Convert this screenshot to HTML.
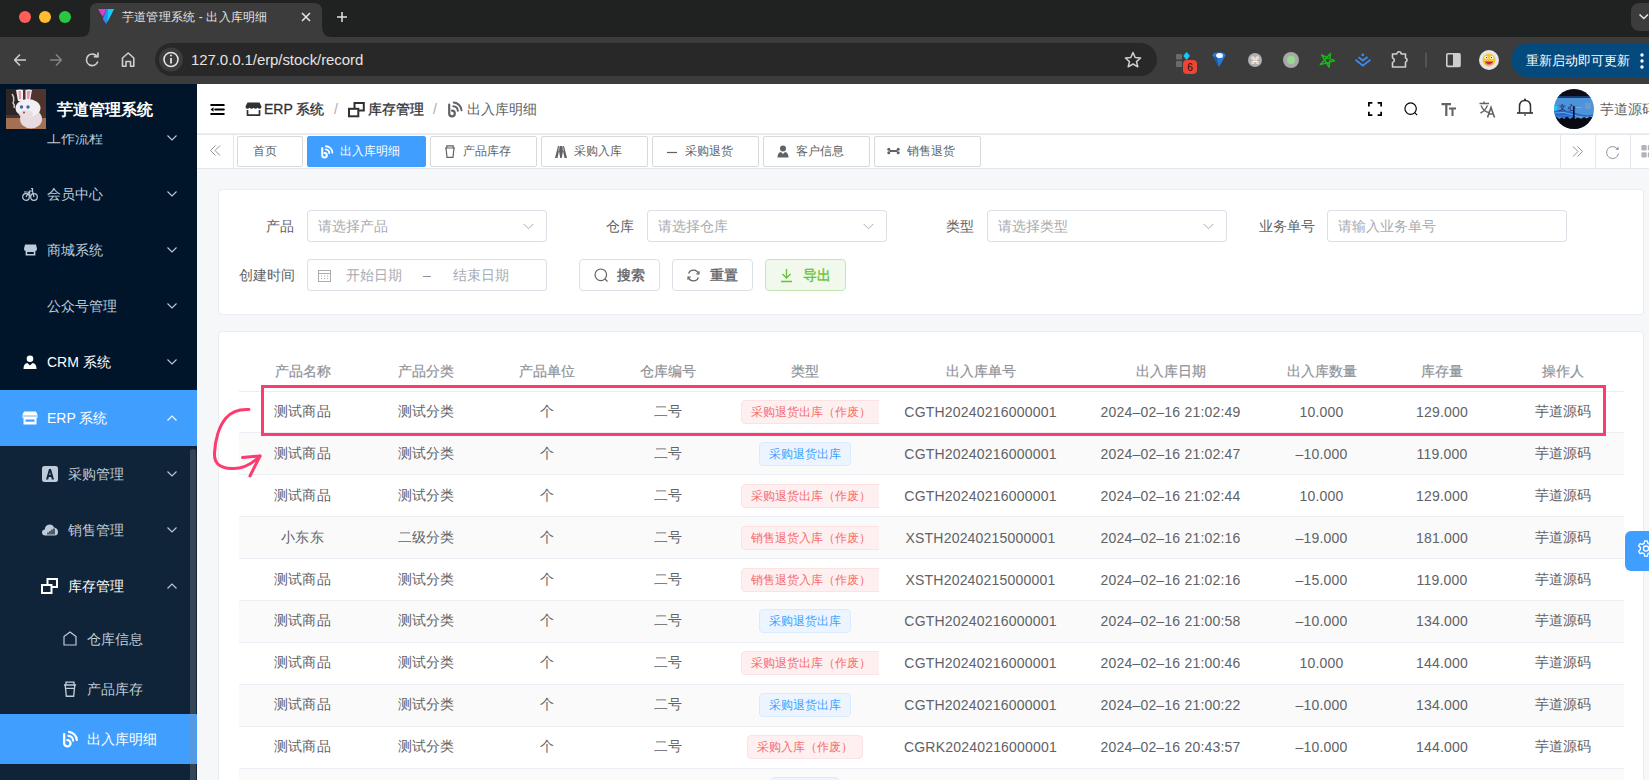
<!DOCTYPE html>
<html><head><meta charset="utf-8">
<style>
*{box-sizing:border-box;margin:0;padding:0}
html,body{width:1649px;height:780px;overflow:hidden;background:#f5f7f9;font-family:"Liberation Sans",sans-serif}
.abs{position:absolute}
svg{display:block}
/* chrome */
#tabstrip{position:absolute;left:0;top:0;width:1649px;height:37px;background:#202121}
#toolbar{position:absolute;left:0;top:37px;width:1649px;height:47px;background:#3c3c3c}
.dot{position:absolute;top:11px;width:12px;height:12px;border-radius:50%}
#omni{position:absolute;left:155px;top:43px;width:1002px;height:33px;border-radius:17px;background:#282828}
#url{position:absolute;left:191px;top:50px;font-size:15px;color:#e3e3e3;line-height:20px;letter-spacing:-0.08px}
#update{position:absolute;left:1511px;top:43px;width:160px;height:34px;border-radius:17px;background:#054a7c;color:#fff;font-size:13px;line-height:35px;padding-left:15px}
/* sidebar */
#sidebar{position:absolute;left:0;top:84px;width:197px;height:696px;background:#001529;overflow:hidden}
.mi{position:absolute;left:0;width:197px;height:56px;color:#bfcbd9;font-size:14px;line-height:56px}
.mi .t{position:absolute;left:47px;top:0}
.mi .ic{position:absolute;left:22px;top:20px}
.mi .ch{position:absolute;left:167px;top:24px}
.sub{background:#0f2438}
.act{background:#409eff;color:#fff}
/* main */
#header{position:absolute;left:197px;top:84px;width:1452px;height:50px;background:#fff;border-bottom:1px solid #eee}
#tags{position:absolute;left:197px;top:134px;width:1452px;height:35px;background:#fff;border-bottom:1px solid #e4e7ed}
.tag{position:absolute;top:2px;height:31px;border:1px solid #d9d9d9;border-radius:2px;font-size:12px;color:#606266;line-height:29px;background:#fff}
.tag.on{background:#409eff;border-color:#409eff;color:#fff}
.card{position:absolute;background:#fff;border:1px solid #e9ecf1;border-radius:4px}
.lbl{position:absolute;font-size:14px;color:#606266;line-height:32px;text-align:right}
.inp{position:absolute;height:32px;border-radius:4px;box-shadow:0 0 0 1px #dcdfe6 inset;font-size:14px;color:#a8abb2;line-height:32px;padding-left:11px}
.btn{position:absolute;height:32px;border-radius:4px;border:1px solid #dcdfe6;font-size:14px;color:#606266;line-height:30px;-webkit-text-stroke:0.35px currentColor}
table{border-collapse:collapse;table-layout:fixed;font-size:14px;color:#606266}
td,th{text-align:center;padding:0;overflow:hidden;white-space:nowrap}
th{height:42px;color:#909399;font-weight:normal;-webkit-text-stroke:0.2px #909399;vertical-align:bottom;padding-bottom:10px}
td{height:41.9px;border-top:1px solid #ebeef5;letter-spacing:0.2px}
td>div{padding:0 12px;overflow:hidden;white-space:nowrap;text-align:center}
tr.s td{background:#fafafa}
.tg{display:inline-block;letter-spacing:0;height:24px;line-height:22px;padding:0 9px;font-size:12px;border-radius:4px;border:1px solid}
.clip{display:inline-block;width:138px;margin-left:1px;overflow:hidden;vertical-align:top;text-align:left}
.tr{background:#fef0f0;border-color:#fde2e2;color:#f56c6c}
.tb{background:#ecf5ff;border-color:#d9ecff;color:#409eff}
</style></head><body>

<!-- ============ BROWSER CHROME ============ -->
<div id="tabstrip"></div>
<div class="dot" style="left:19px;background:#ff5f57"></div>
<div class="dot" style="left:39px;background:#febc2e"></div>
<div class="dot" style="left:59px;background:#28c840"></div>
<svg class="abs" style="left:0;top:0" width="400" height="40">
  <path d="M80 37 Q90 37 90 27 L90 11 Q90 3 98 3 L314 3 Q322 3 322 11 L322 27 Q322 37 332 37 Z" fill="#3c3c3c"/>
  <polygon points="98,9 106.4,9 102.8,17" fill="#e03cc8"/>
  <polygon points="106.4,9 114,9 106.1,24 102.8,19" fill="#2a8ef0"/>
  <polygon points="108,9 114,9 107.5,22" fill="#14ccf8"/>
  <path d="M302 13 L310 21 M310 13 L302 21" stroke="#e3e3e3" stroke-width="1.6"/>
  <path d="M342 12 V22 M337 17 H347" stroke="#e3e3e3" stroke-width="1.5"/>
</svg>
<div class="abs" style="left:122px;top:9px;font-size:12px;color:#e3e3e3;line-height:16px;letter-spacing:0.2px">芋道管理系统 - 出入库明细</div>
<div class="abs" style="left:1631px;top:3px;width:36px;height:28px;border-radius:8px;background:#3c3c3c"></div>
<svg class="abs" style="left:1638px;top:12px" width="11" height="9"><path d="M1.5 2.5 L5.8 6.5 L10 2.5" stroke="#e3e3e3" stroke-width="1.6" fill="none"/></svg>
<div id="toolbar"></div>
<svg class="abs" style="left:0;top:37px" width="150" height="47">
  <path d="M14.5 23 H26 M14.5 23 L20 17.5 M14.5 23 L20 28.5" stroke="#cfcfcf" stroke-width="1.6" fill="none"/>
  <path d="M61.5 23 H50 M61.5 23 L56 17.5 M61.5 23 L56 28.5" stroke="#858585" stroke-width="1.6" fill="none"/>
  <path d="M97.3 20 A5.8 5.8 0 1 0 97.8 24.5" stroke="#cfcfcf" stroke-width="1.6" fill="none"/>
  <path d="M93.8 19.8 H98 V15.5" stroke="#cfcfcf" stroke-width="1.6" fill="none"/>
  <path d="M122.5 21 L128.2 16 L133.8 21 V29.2 H130.5 V24.5 H126 V29.2 H122.5 Z" stroke="#cfcfcf" stroke-width="1.6" fill="none" stroke-linejoin="round"/>
</svg>
<div id="omni"></div>
<svg class="abs" style="left:155px;top:43px" width="40" height="33">
  <circle cx="16" cy="16.5" r="12" fill="#3c3c3c"/>
  <circle cx="16" cy="16.5" r="7" stroke="#e3e3e3" stroke-width="1.6" fill="none"/>
  <path d="M16 15 V20.5" stroke="#e3e3e3" stroke-width="1.8"/>
  <circle cx="16" cy="12.5" r="1" fill="#e3e3e3"/>
</svg>
<div id="url">127.0.0.1/erp/stock/record</div>
<svg class="abs" style="left:1120px;top:47px" width="28" height="28">
  <polygon points="13,5.5 15.2,10.5 20.6,11 16.5,14.6 17.8,19.8 13,17 8.2,19.8 9.5,14.6 5.4,11 10.8,10.5" stroke="#cfcfcf" stroke-width="1.5" fill="none" stroke-linejoin="round"/>
</svg>
<svg class="abs" style="left:1170px;top:44px" width="480" height="36">
  <rect x="6" y="10" width="6" height="5.5" rx="0.8" fill="#6a6a6a"/>
  <rect x="6" y="17" width="6" height="6" rx="0.8" fill="#6a6a6a"/>
  <path d="M14 11.8 L16.6 8.8 L19.2 11.8 L16.6 15 Z" fill="#18c8f5" stroke="#18c8f5" stroke-width="1.2" stroke-linejoin="round"/>
  <rect x="13" y="16" width="14" height="14" rx="4" fill="#ee4436"/>
  <text x="20" y="27" font-size="10" text-anchor="middle" fill="#111" font-family="Liberation Sans">6</text>
  <path d="M42.5 11.5 Q43 8.5 46.5 8.5 H51.5 Q55 8.5 55.5 11.5 L49 23 Z" fill="#2a78d8"/>
  <ellipse cx="49.5" cy="11.5" rx="3.5" ry="2.6" fill="#f0f6ff"/>
  <path d="M43 12 L49 23 L47 13 Z" fill="#1a5aa8"/>
  <circle cx="85" cy="16" r="7" fill="#b0b0b0"/>
  <text x="85" y="19.8" font-size="10" text-anchor="middle" fill="#fafafa" font-family="Liberation Sans">⌘</text>
  <circle cx="121" cy="16" r="8" fill="#a8a8a8"/>
  <circle cx="121" cy="16" r="4" fill="#98d890"/>
  <path d="M160.4 9.4 L159.1 23.3 L151.6 10.9 L164.6 16.7 L150.4 20.6 Z" stroke="#18b418" stroke-width="1.5" fill="none" stroke-linejoin="round"/>
  <path d="M188.5 13.1 L192.8 16.5 L197.5 13.1 M185.6 15.8 L192.8 21.6 L200.4 15.8" stroke="#3d8cf0" stroke-width="1.8" fill="none"/>
  <circle cx="192.8" cy="10.9" r="1.3" fill="#3d8cf0"/>
  <path d="M222.5 10 H226.8 A2.2 2.2 0 0 1 231.2 10 H235.5 V14 A2.2 2.2 0 0 1 235.5 18.2 V23 H222.5 V18.5 A2.3 2.3 0 0 0 222.5 14 Z" stroke="#cfcfcf" stroke-width="1.6" fill="none" stroke-linejoin="round"/>
  <path d="M256 8.5 V23.5" stroke="#6a6a6a" stroke-width="1"/>
  <rect x="276.8" y="9.8" width="13.2" height="12.6" rx="1" stroke="#cfcfcf" stroke-width="1.6" fill="none"/>
  <rect x="283" y="9.8" width="7" height="12.6" fill="#cfcfcf"/>
  <circle cx="319" cy="16" r="10" fill="#e6e6e6"/>
  <circle cx="319" cy="16" r="6.5" fill="#f3c83a"/>
  <path d="M314.5 17.5 Q319 24.5 323.5 17.5 Z" fill="#c8283a"/>
  <path d="M315.5 19.5 Q319 22 322.5 19.5" stroke="#f07090" stroke-width="1" fill="none"/>
  <circle cx="316.2" cy="13.5" r="1.6" fill="#fff"/><circle cx="321.8" cy="13.5" r="1.6" fill="#fff"/>
  <circle cx="316.5" cy="13.6" r="0.7" fill="#333"/><circle cx="321.5" cy="13.6" r="0.7" fill="#333"/>
</svg>
<div id="update">重新启动即可更新</div>
<svg class="abs" style="left:1637px;top:51px" width="13" height="20">
  <circle cx="5" cy="4" r="1.7" fill="#fff"/><circle cx="5" cy="10" r="1.7" fill="#fff"/><circle cx="5" cy="16" r="1.7" fill="#fff"/>
</svg>

<!-- ============ SIDEBAR ============ -->
<div id="sidebar">
  <div class="abs" style="left:0;top:50px;width:197px;height:646px;overflow:hidden">
    <div class="mi" style="top:-24px"><span class="t">工作流程</span><svg class="ch" style="left:167px;top:25px" width="10" height="6" viewBox="0 0 10 6"><path d="M0.5 0.5 L5 5 L9.5 0.5" stroke="#bfcbd9" stroke-width="1.1" fill="none"/></svg></div>
    <div class="mi" style="top:32px">
      <svg class="ic" style="left:22px;top:21px" width="16" height="14" viewBox="0 0 16 14"><circle cx="4" cy="10" r="3.3" stroke="#bfcbd9" stroke-width="1.2" fill="none"/><circle cx="12" cy="10" r="3.3" stroke="#bfcbd9" stroke-width="1.2" fill="none"/><path d="M4 10 L7.5 4 L10.5 4 L12 10 M7.5 4 L8 10 M9 1.5 L10.5 1.5 L10.5 4 M2 5 H5.5" stroke="#bfcbd9" stroke-width="1.2" fill="none"/></svg>
      <span class="t">会员中心</span><svg class="ch" style="left:167px;top:25px" width="10" height="6" viewBox="0 0 10 6"><path d="M0.5 0.5 L5 5 L9.5 0.5" stroke="#bfcbd9" stroke-width="1.1" fill="none"/></svg></div>
    <div class="mi" style="top:88px">
      <svg class="ic" style="left:24px;top:22px" width="13" height="12" viewBox="0 0 12 12" preserveAspectRatio="none"><path d="M1 0.5 H11 L12 4.5 Q12 7 10.5 7 V11.5 H1.5 V7 Q0 7 0 4.5 Z" fill="#bfcbd9"/><rect x="3" y="8" width="6" height="2" fill="#001529"/></svg>
      <span class="t">商城系统</span><svg class="ch" style="left:167px;top:25px" width="10" height="6" viewBox="0 0 10 6"><path d="M0.5 0.5 L5 5 L9.5 0.5" stroke="#bfcbd9" stroke-width="1.1" fill="none"/></svg></div>
    <div class="mi" style="top:144px"><span class="t">公众号管理</span><svg class="ch" style="left:167px;top:25px" width="10" height="6" viewBox="0 0 10 6"><path d="M0.5 0.5 L5 5 L9.5 0.5" stroke="#bfcbd9" stroke-width="1.1" fill="none"/></svg></div>
    <div class="mi" style="top:200px">
      <svg class="ic" style="left:23px;top:21px" width="14" height="14" viewBox="0 0 14 14"><circle cx="7" cy="3.8" r="3.3" fill="#fff"/><path d="M0.5 14 Q0.5 8.5 4.5 8 L7 10.5 L9.5 8 Q13.5 8.5 13.5 14 Z" fill="#fff"/></svg>
      <span class="t" style="color:#fff">CRM 系统</span><svg class="ch" style="left:167px;top:25px" width="10" height="6" viewBox="0 0 10 6"><path d="M0.5 0.5 L5 5 L9.5 0.5" stroke="#bfcbd9" stroke-width="1.1" fill="none"/></svg></div>
    <div class="mi act" style="top:256px">
      <svg class="ic" style="left:22px;top:21px" width="16" height="14" viewBox="0 0 16 14"><path d="M2 0.5 H14 L16 5 Q16 7 14.5 7 V13.5 H1.5 V7 Q0 7 0 5 Z" fill="#fff"/><rect x="3.5" y="8.5" width="9" height="2.2" fill="#409eff"/><path d="M0 5 H16" stroke="#409eff" stroke-width="0.8"/></svg>
      <span class="t">ERP 系统</span><svg class="ch" style="left:167px;top:25px" width="10" height="6" viewBox="0 0 10 6"><path d="M0.5 5.5 L5 1 L9.5 5.5" stroke="currentColor" stroke-width="1.1" fill="none"/></svg></div>
    <div class="abs sub" style="left:0;top:312px;width:197px;height:400px">
      <div class="mi" style="top:0">
        <svg class="ic" style="left:42px;top:20px" width="16" height="16" viewBox="0 0 16 16"><rect x="0" y="0" width="16" height="16" rx="2.5" fill="#bfcbd9"/><path d="M4 13.5 L7 3 H9 L12 13.5 H9.8 L9.2 11 H6.8 L6.2 13.5 Z M7.3 9 H8.7 L8 6 Z" fill="#0f2438"/></svg>
        <span class="t" style="left:68px">采购管理</span><svg class="ch" style="left:167px;top:25px" width="10" height="6" viewBox="0 0 10 6"><path d="M0.5 0.5 L5 5 L9.5 0.5" stroke="#bfcbd9" stroke-width="1.1" fill="none"/></svg></div>
      <div class="mi" style="top:56px">
        <svg class="ic" style="left:42px;top:21px" width="16" height="13" viewBox="0 0 16 13"><path d="M3.5 12.5 Q0 12.5 0 9.5 Q0 6.8 2.8 6.5 Q3 2 7.5 1.5 Q11 1.5 12 4.5 Q16 5 16 9 Q16 12.5 12.5 12.5 Z" fill="#bfcbd9"/><path d="M6 11.5 V9.5 M8 11.5 V8 M10 11.5 V6.5 M12 11.5 V5.5" stroke="#0f2438" stroke-width="1.3"/></svg>
        <span class="t" style="left:68px">销售管理</span><svg class="ch" style="left:167px;top:25px" width="10" height="6" viewBox="0 0 10 6"><path d="M0.5 0.5 L5 5 L9.5 0.5" stroke="#bfcbd9" stroke-width="1.1" fill="none"/></svg></div>
      <div class="mi" style="top:112px">
        <svg class="ic" style="left:41px;top:20px" width="17" height="16" viewBox="0 0 17 16"><rect x="6.5" y="1" width="9.5" height="8" stroke="#fff" stroke-width="2" fill="none"/><rect x="1" y="7" width="9.5" height="8" stroke="#fff" stroke-width="2" fill="#0f2438"/></svg>
        <span class="t" style="left:68px;color:#fff">库存管理</span><svg class="ch" style="left:167px;top:25px" width="10" height="6" viewBox="0 0 10 6"><path d="M0.5 5.5 L5 1 L9.5 5.5" stroke="currentColor" stroke-width="1.1" fill="none"/></svg></div>
      <div class="mi" style="top:168px;height:50px;line-height:50px">
        <svg class="ic" style="left:63px;top:17px" width="14" height="15" viewBox="0 0 14 15"><path d="M1 14 V5.5 L7 1 L13 5.5 V14 Z" stroke="#bfcbd9" stroke-width="1.2" fill="none" stroke-linejoin="round"/></svg>
        <span class="t" style="left:87px">仓库信息</span></div>
      <div class="mi" style="top:218px;height:50px;line-height:50px">
        <svg class="ic" style="left:63px;top:17px" width="14" height="16" viewBox="0 0 12 14"><path d="M0.7 3.5 H11.3 M1.8 3.5 L2.8 13.3 H9.2 L10.2 3.5 M2.5 3.5 V1 H9.5 V3.5 M2.3 6.5 H9.7" stroke="#bfcbd9" stroke-width="1.2" fill="none"/></svg>
        <span class="t" style="left:87px">产品库存</span></div>
      <div class="mi act" style="top:268px;height:50px;line-height:50px">
        <svg class="ic" style="left:61px;top:16px" width="18" height="18" viewBox="0 0 16 17"><path d="M2.5 4 V12.5 A3 3 0 1 0 5.5 9.5" stroke="#fff" stroke-width="2.2" fill="none" stroke-linecap="round"/><path d="M6.5 5.5 A5 5 0 0 1 11 10 M7 1.8 A8.5 8.5 0 0 1 14.5 9.5" stroke="#fff" stroke-width="2" fill="none" stroke-linecap="round"/></svg>
        <span class="t" style="left:87px">出入库明细</span></div>
    </div>
    <div class="abs" style="left:190px;top:315px;width:6px;height:400px;border-radius:3px;background:rgba(144,147,153,0.3)"></div>
  </div>
  <div class="abs" style="left:0;top:0;width:197px;height:50px;background:#001529">
    <svg class="abs" style="left:6px;top:5px" width="40" height="40" viewBox="0 0 40 40">
      <rect width="40" height="40" fill="#4e342c"/>
      <rect x="0" y="0" width="13" height="26" fill="#2e2624"/>
      <path d="M6 5 Q9 9 7 14 Q9 16 8 19" stroke="#c8c8c8" stroke-width="1.5" fill="none"/>
      <rect y="29" width="40" height="11" fill="#a27052"/>
      <path d="M10 1 Q14 0 17 1 L17 12 L12 12 Z" fill="#f2eef0"/>
      <path d="M12.5 2 L15 2 L15 10 L13 10 Z" fill="#e898b0"/>
      <path d="M19.5 1 Q23 0 26 1 L24 12 L19.5 12 Z" fill="#f2eef0"/>
      <path d="M21 2 L24.5 2 L23 10 L21 10 Z" fill="#e898b0"/>
      <ellipse cx="25" cy="30" rx="11" ry="9.5" fill="#e6dbe0"/>
      <ellipse cx="22" cy="19" rx="12.5" ry="9" fill="#f2f0f2"/>
      <ellipse cx="20" cy="25" rx="7" ry="4" fill="#eadde2"/>
      <circle cx="15.5" cy="18" r="1.7" fill="#3a68a8"/>
      <circle cx="22" cy="18" r="1.7" fill="#3a68a8"/>
      <circle cx="18" cy="23.5" r="1" fill="#7a4a3a"/>
    </svg>
    <div class="abs" style="left:57px;top:16px;font-size:16px;font-weight:bold;color:#fff;line-height:20px">芋道管理系统</div>
  </div>
</div>

<!-- ============ HEADER ============ -->
<div id="header">
  <svg class="abs" style="left:13px;top:20px" width="15" height="12" viewBox="0 0 15 12">
    <path d="M1.2 1 H13.8 M5.2 5.5 H13.8 M1.2 10 H13.8" stroke="#000" stroke-width="2" stroke-linecap="round"/>
    <path d="M0.5 5.5 L3.5 3.2 V7.8 Z" fill="#000"/>
  </svg>
  <svg class="abs" style="left:48px;top:18px" width="17" height="14" viewBox="0 0 17 14">
    <path d="M2.5 0.5 H14.5 L16.5 4.5 Q16.5 6.8 14.8 6.8 Q13.3 6.8 12.5 5.8 Q11.5 6.8 10.5 6.8 Q9.2 6.8 8.5 5.8 Q7.8 6.8 6.5 6.8 Q5.5 6.8 4.5 5.8 Q3.7 6.8 2.2 6.8 Q0.5 6.8 0.5 4.5 Z" fill="#303133"/>
    <path d="M2.5 8 V13.2 H14.5 V8" stroke="#303133" stroke-width="1.7" fill="none" stroke-linejoin="round"/>
  </svg>
  <div class="abs" style="left:67px;top:15px;font-size:14px;line-height:20px;color:#303133;-webkit-text-stroke:0.3px #303133">ERP 系统</div>
  <div class="abs" style="left:137px;top:15px;font-size:14px;line-height:20px;color:#a8abb2">/</div>
  <svg class="abs" style="left:151px;top:18px" width="17" height="16" viewBox="0 0 17 16">
    <rect x="6.5" y="1" width="9.3" height="7.5" stroke="#303133" stroke-width="2" fill="none"/>
    <rect x="1" y="6.8" width="9.3" height="7.5" stroke="#303133" stroke-width="2" fill="#fff"/>
  </svg>
  <div class="abs" style="left:171px;top:15px;font-size:14px;line-height:20px;color:#303133;-webkit-text-stroke:0.3px #303133">库存管理</div>
  <div class="abs" style="left:236px;top:15px;font-size:14px;line-height:20px;color:#a8abb2">/</div>
  <svg class="abs" style="left:250px;top:17px" width="16" height="17" viewBox="0 0 16 17">
    <path d="M2.2 3.5 V12.5 A2.8 2.8 0 1 0 5 9.7" stroke="#606266" stroke-width="2.2" fill="none" stroke-linecap="round"/>
    <path d="M6.3 5.3 A4.8 4.8 0 0 1 10.8 9.8 M6.8 1.5 A8.3 8.3 0 0 1 14.5 9.3" stroke="#606266" stroke-width="2" fill="none" stroke-linecap="round"/>
  </svg>
  <div class="abs" style="left:270px;top:15px;font-size:14px;line-height:20px;color:#606266">出入库明细</div>

  <svg class="abs" style="left:1171px;top:18px" width="14" height="14" viewBox="0 0 16 16">
    <path d="M1 5 V1 H5 M11 1 H15 V5 M15 11 V15 H11 M5 15 H1 V11" stroke="#000" stroke-width="2" fill="none"/>
  </svg>
  <svg class="abs" style="left:1207px;top:18px" width="14.5" height="14.5" viewBox="0 0 16 16">
    <circle cx="7.3" cy="7.3" r="6.3" stroke="#000" stroke-width="1.3" fill="none"/>
    <path d="M11.8 11.8 L14.5 14.5" stroke="#000" stroke-width="1.3"/>
  </svg>
  <svg class="abs" style="left:1244px;top:19px" width="16" height="14" viewBox="0 0 16 14">
    <path d="M0.5 1.2 H10 M5.3 1.2 V13" stroke="#606266" stroke-width="2.2"/>
    <path d="M8 5.5 H15 M11.5 5.5 V13" stroke="#606266" stroke-width="2"/>
  </svg>
  <svg class="abs" style="left:1282px;top:17px" width="17" height="17" viewBox="0 0 17 17">
    <path d="M0.5 2.5 H10 M5 0.5 V2.5 M2 4.5 Q5 11 10 11.5 M8.5 4.5 Q6 10 1.5 12" stroke="#606266" stroke-width="1.4" fill="none"/>
    <path d="M8.5 16.5 L12 6.5 L15.5 16.5 M9.8 13 H14.2" stroke="#606266" stroke-width="1.6" fill="none"/>
  </svg>
  <svg class="abs" style="left:1319px;top:14px" width="18" height="18" viewBox="0 0 18 18">
    <path d="M3.5 15 V8.5 Q3.5 2.5 9 2.5 Q14.5 2.5 14.5 8.5 V15" stroke="#303133" stroke-width="1.5" fill="none"/>
    <path d="M1 15 H17" stroke="#303133" stroke-width="1.6"/>
    <circle cx="9" cy="1.7" r="1.1" fill="#303133"/>
    <path d="M8.2 17 H9.8" stroke="#303133" stroke-width="1.3"/>
  </svg>
  <svg class="abs" style="left:1357px;top:5px" width="40" height="40" viewBox="0 0 40 40">
    <defs><clipPath id="av"><circle cx="20" cy="20" r="20"/></clipPath></defs>
    <g clip-path="url(#av)">
      <rect width="40" height="40" fill="#4d93da"/>
      <rect width="40" height="7" fill="#0c0c18"/>
      <rect y="7" width="40" height="2" fill="#1c3a70"/>
      <path d="M0 22 Q12 20 22 24 T40 25 V30 Q28 26 18 28 T0 27 Z" fill="#2566c8"/>
      <path d="M0 24 Q10 22 20 26 T40 27" stroke="#7ab8f0" stroke-width="0.8" fill="none"/>
      <path d="M0 28 Q14 25 24 29 T40 29" stroke="#3a80e0" stroke-width="1" fill="none"/>
      <path d="M0 29 L3 28 L5 30 L8 28.5 L10 30 L13 27.5 L16 30 L19 28 L21 30 L24 28.5 L27 30 L30 28 L33 29.5 L36 27.5 L40 29 V40 H0 Z" fill="#0a0a12"/>
      <rect x="19" y="17" width="1.6" height="13" fill="#0a0a12"/>
      <text x="5" y="20.5" font-size="6.5" font-weight="bold" fill="#1a2c6a" font-family="Liberation Sans">文 心</text>
      <path d="M22 18.5 H28" stroke="#7aa8e0" stroke-width="1.2"/>
      <rect x="31" y="14" width="6" height="6" fill="#6b9ad0"/>
      <circle cx="1" cy="19" r="2.5" fill="#20c8f8"/>
    </g>
  </svg>
  <div class="abs" style="left:1403px;top:15px;font-size:14px;line-height:20px;color:#606266;white-space:nowrap">芋道源码</div>
</div>
<div id="tags" style="border:none;background:transparent">
  <div class="abs" style="left:0;top:0;width:1452px;height:1px;background:#e4e7ed"></div>
  <div class="abs" style="left:0;top:1px;width:1452px;height:34px;background:#fff"></div>
  <div class="abs" style="left:0;top:34px;width:1452px;height:1px;background:#e4e7ed"></div>
  <div class="abs" style="left:36px;top:0;width:1px;height:35px;background:#e4e7ed"></div>
  <svg class="abs" style="left:13px;top:11px" width="12" height="12" viewBox="0 0 12 12">
    <path d="M5.5 0.5 L0.5 5.5 L5.5 10.5 M10 0.5 L5 5.5 L10 10.5" stroke="#909399" stroke-width="1" fill="none"/>
  </svg>
  <div class="tag" style="left:40px;width:66px;padding-left:15px">首页</div>
  <div class="tag on" style="left:110px;width:119px">
    <svg class="abs" style="left:12px;top:8px" width="14" height="14" viewBox="0 0 16 17">
      <path d="M2.2 3.5 V12.5 A2.8 2.8 0 1 0 5 9.7" stroke="#fff" stroke-width="2.4" fill="none" stroke-linecap="round"/>
      <path d="M6.3 5.3 A4.8 4.8 0 0 1 10.8 9.8 M6.8 1.5 A8.3 8.3 0 0 1 14.5 9.3" stroke="#fff" stroke-width="2.2" fill="none" stroke-linecap="round"/>
    </svg>
    <span class="abs" style="left:32px;top:0">出入库明细</span>
  </div>
  <div class="tag" style="left:233px;width:107px">
    <svg class="abs" style="left:13px;top:8px" width="12" height="13" viewBox="0 0 12 13">
      <path d="M1 3 H11 M2 3 L3 12.3 H9 L10 3 M2.8 3 V0.8 H9.2 V3" stroke="#606266" stroke-width="1.2" fill="none"/>
    </svg>
    <span class="abs" style="left:32px;top:0">产品库存</span>
  </div>
  <div class="tag" style="left:344px;width:107px">
    <svg class="abs" style="left:12px;top:8px" width="14" height="13" viewBox="0 0 14 13">
      <path d="M1 13 L4 1 H10 L13 13 H10.5 L9 6 L7.8 13 H6.2 L5 6 L3.5 13 Z" fill="#606266"/>
      <path d="M5.5 1 L4.5 6 M8.5 1 L9.5 6" stroke="#fff" stroke-width="0.6"/>
    </svg>
    <span class="abs" style="left:32px;top:0">采购入库</span>
  </div>
  <div class="tag" style="left:455px;width:107px">
    <svg class="abs" style="left:13px;top:14px" width="12" height="3" viewBox="0 0 12 3"><path d="M1 1.5 H11" stroke="#606266" stroke-width="1.2"/></svg>
    <span class="abs" style="left:32px;top:0">采购退货</span>
  </div>
  <div class="tag" style="left:566px;width:107px">
    <svg class="abs" style="left:13px;top:8px" width="12" height="13" viewBox="0 0 12 13"><circle cx="6" cy="3.5" r="3" fill="#606266"/><path d="M0.5 12.5 Q0.5 7.5 4 7 L6 9 L8 7 Q11.5 7.5 11.5 12.5 Z" fill="#606266"/></svg>
    <span class="abs" style="left:32px;top:0">客户信息</span>
  </div>
  <div class="tag" style="left:677px;width:107px">
    <svg class="abs" style="left:12px;top:9px" width="13" height="10" viewBox="0 0 13 10"><path d="M2.5 5 H10.5" stroke="#606266" stroke-width="2"/><circle cx="1.8" cy="3.3" r="1.5" fill="#606266"/><circle cx="1.8" cy="6.7" r="1.5" fill="#606266"/><circle cx="11.2" cy="3.3" r="1.5" fill="#606266"/><circle cx="11.2" cy="6.7" r="1.5" fill="#606266"/></svg>
    <span class="abs" style="left:32px;top:0">销售退货</span>
  </div>
  <div class="abs" style="left:1363px;top:0;width:1px;height:35px;background:#e4e7ed"></div>
  <div class="abs" style="left:1398px;top:0;width:1px;height:35px;background:#e4e7ed"></div>
  <div class="abs" style="left:1433px;top:0;width:1px;height:35px;background:#e4e7ed"></div>
  <svg class="abs" style="left:1375px;top:12px" width="12" height="12" viewBox="0 0 12 12">
    <path d="M1 0.5 L6 5.5 L1 10.5 M5.5 0.5 L10.5 5.5 L5.5 10.5" stroke="#909399" stroke-width="1" fill="none"/>
  </svg>
  <svg class="abs" style="left:1408px;top:10px" width="16" height="16" viewBox="0 0 16 16">
    <path d="M13 6 A6 6 0 1 0 13.5 9.5" stroke="#909399" stroke-width="1" fill="none"/>
    <path d="M10.5 5.8 H13.6 V2.6 Z" fill="#909399"/>
  </svg>
  <svg class="abs" style="left:1444px;top:11px" width="8" height="14" viewBox="0 0 8 14">
    <rect x="0.4" y="0.1" width="5.2" height="5.4" rx="1.2" fill="#b1b3b8"/><rect x="0.4" y="7.2" width="5.2" height="5.3" rx="1.2" fill="#b1b3b8"/><rect x="6.8" y="0.1" width="5.2" height="5.4" rx="1.2" fill="#b1b3b8"/><rect x="6.8" y="7.2" width="5.2" height="5.3" rx="1.2" fill="#b1b3b8"/>
  </svg>
</div>

<!-- ============ FILTER CARD ============ -->
<div class="card" style="left:218px;top:189px;width:1426px;height:126px"></div>
<div class="lbl" style="left:239px;top:210px;width:55px">产品</div>
<div class="inp" style="left:307px;top:210px;width:240px">请选择产品<svg class="abs" style="right:13px;top:13px" width="11" height="7" viewBox="0 0 11 7"><path d="M0.5 0.8 L5.5 5.8 L10.5 0.8" stroke="#a8abb2" stroke-width="1" fill="none"/></svg></div>
<div class="lbl" style="left:579px;top:210px;width:55px">仓库</div>
<div class="inp" style="left:647px;top:210px;width:240px">请选择仓库<svg class="abs" style="right:13px;top:13px" width="11" height="7" viewBox="0 0 11 7"><path d="M0.5 0.8 L5.5 5.8 L10.5 0.8" stroke="#a8abb2" stroke-width="1" fill="none"/></svg></div>
<div class="lbl" style="left:919px;top:210px;width:55px">类型</div>
<div class="inp" style="left:987px;top:210px;width:240px">请选择类型<svg class="abs" style="right:13px;top:13px" width="11" height="7" viewBox="0 0 11 7"><path d="M0.5 0.8 L5.5 5.8 L10.5 0.8" stroke="#a8abb2" stroke-width="1" fill="none"/></svg></div>
<div class="lbl" style="left:1259px;top:210px;width:56px">业务单号</div>
<div class="inp" style="left:1327px;top:210px;width:240px">请输入业务单号</div>
<div class="lbl" style="left:239px;top:259px;width:56px">创建时间</div>
<div class="inp" style="left:307px;top:259px;width:240px;padding-left:0">
  <svg class="abs" style="left:11px;top:10px" width="13" height="13" viewBox="0 0 13 13"><rect x="0.5" y="1.5" width="12" height="11" stroke="#a8abb2" stroke-width="1" fill="none"/><path d="M0.5 4.5 H12.5" stroke="#a8abb2"/><path d="M3 7 H4 M6 7 H7 M9 7 H10 M3 9.5 H4 M6 9.5 H7 M9 9.5 H10" stroke="#a8abb2"/></svg>
  <span class="abs" style="left:39px;top:0">开始日期</span>
  <span class="abs" style="left:116px;top:0;color:#8d9095">–</span>
  <span class="abs" style="left:146px;top:0">结束日期</span>
</div>
<div class="btn" style="left:579px;top:259px;width:81px">
  <svg class="abs" style="left:14px;top:8px" width="15" height="15" viewBox="0 0 15 15"><circle cx="6.8" cy="6.8" r="5.8" stroke="#606266" stroke-width="1.2" fill="none"/><path d="M11 11 L13.5 13.5" stroke="#606266" stroke-width="1.2"/></svg>
  <span class="abs" style="left:37px;top:0">搜索</span>
</div>
<div class="btn" style="left:672px;top:259px;width:81px">
  <svg class="abs" style="left:14px;top:9px" width="13" height="13" viewBox="0 0 13 13"><path d="M11.5 5 A5.2 5.2 0 0 0 1.6 4.5 M1.5 8 A5.2 5.2 0 0 0 11.4 8.5" stroke="#606266" stroke-width="1.2" fill="none"/><path d="M9.2 5 H12 V2.2 M3.8 8 H1 V10.8" stroke="#606266" stroke-width="1.2" fill="none"/></svg>
  <span class="abs" style="left:37px;top:0">重置</span>
</div>
<div class="btn" style="left:765px;top:259px;width:81px;background:#f0f9eb;border-color:#c2e7b0;color:#67c23a">
  <svg class="abs" style="left:14px;top:8px" width="13" height="15" viewBox="0 0 13 15"><path d="M6.5 1 V10 M2.5 6 L6.5 10 L10.5 6 M1 13.5 H12" stroke="#67c23a" stroke-width="1.3" fill="none"/></svg>
  <span class="abs" style="left:37px;top:0">导出</span>
</div>

<!-- ============ TABLE CARD ============ -->
<div class="card" style="left:218px;top:331px;width:1426px;height:480px"></div>
<table class="abs" style="left:239px;top:349px;width:1385px">
<colgroup><col style="width:127px"><col style="width:120px"><col style="width:122px"><col style="width:120px"><col style="width:153px"><col style="width:199px"><col style="width:181px"><col style="width:121px"><col style="width:120px"><col style="width:122px"></colgroup>
<tr><th>产品名称</th><th>产品分类</th><th>产品单位</th><th>仓库编号</th><th>类型</th><th>出入库单号</th><th>出入库日期</th><th>出入库数量</th><th>库存量</th><th>操作人</th></tr>
<tr><td>测试商品</td><td>测试分类</td><td>个</td><td>二号</td><td><div><span class="clip"><span class="tg tr" style="padding-right:16px">采购退货出库（作废）</span></span></div></td><td>CGTH20240216000001</td><td>2024–02–16 21:02:49</td><td>10.000</td><td>129.000</td><td>芋道源码</td></tr>
<tr class="s"><td>测试商品</td><td>测试分类</td><td>个</td><td>二号</td><td><div><span class="tg tb">采购退货出库</span></div></td><td>CGTH20240216000001</td><td>2024–02–16 21:02:47</td><td>–10.000</td><td>119.000</td><td>芋道源码</td></tr>
<tr><td>测试商品</td><td>测试分类</td><td>个</td><td>二号</td><td><div><span class="clip"><span class="tg tr" style="padding-right:16px">采购退货出库（作废）</span></span></div></td><td>CGTH20240216000001</td><td>2024–02–16 21:02:44</td><td>10.000</td><td>129.000</td><td>芋道源码</td></tr>
<tr class="s"><td>小东东</td><td>二级分类</td><td>个</td><td>二号</td><td><div><span class="clip"><span class="tg tr" style="padding-right:16px">销售退货入库（作废）</span></span></div></td><td>XSTH20240215000001</td><td>2024–02–16 21:02:16</td><td>–19.000</td><td>181.000</td><td>芋道源码</td></tr>
<tr><td>测试商品</td><td>测试分类</td><td>个</td><td>二号</td><td><div><span class="clip"><span class="tg tr" style="padding-right:16px">销售退货入库（作废）</span></span></div></td><td>XSTH20240215000001</td><td>2024–02–16 21:02:16</td><td>–15.000</td><td>119.000</td><td>芋道源码</td></tr>
<tr class="s"><td>测试商品</td><td>测试分类</td><td>个</td><td>二号</td><td><div><span class="tg tb">采购退货出库</span></div></td><td>CGTH20240216000001</td><td>2024–02–16 21:00:58</td><td>–10.000</td><td>134.000</td><td>芋道源码</td></tr>
<tr><td>测试商品</td><td>测试分类</td><td>个</td><td>二号</td><td><div><span class="clip"><span class="tg tr" style="padding-right:16px">采购退货出库（作废）</span></span></div></td><td>CGTH20240216000001</td><td>2024–02–16 21:00:46</td><td>10.000</td><td>144.000</td><td>芋道源码</td></tr>
<tr class="s"><td>测试商品</td><td>测试分类</td><td>个</td><td>二号</td><td><div><span class="tg tb">采购退货出库</span></div></td><td>CGTH20240216000001</td><td>2024–02–16 21:00:22</td><td>–10.000</td><td>134.000</td><td>芋道源码</td></tr>
<tr><td>测试商品</td><td>测试分类</td><td>个</td><td>二号</td><td><div><span class="tg tr">采购入库（作废）</span></div></td><td>CGRK20240216000001</td><td>2024–02–16 20:43:57</td><td>–10.000</td><td>144.000</td><td>芋道源码</td></tr>
<tr class="s"><td>测试商品</td><td>测试分类</td><td>个</td><td>二号</td><td><div><span class="tg tb">采购入库</span></div></td><td>CGRK20240216000001</td><td>2024–02–16 20:43:50</td><td>10.000</td><td>154.000</td><td>芋道源码</td></tr>
</table>

<!-- ============ ANNOTATION ============ -->
<svg class="abs" style="left:0;top:0" width="1649" height="780">
  <rect x="262.5" y="386.5" width="1342" height="48" fill="none" stroke="#fe3a6f" stroke-width="3"/>
  <path d="M249 409.5 C240 409 232 411 226 418 C219 426 215 440 214.5 453 C214 463 219 468 232 468.5 C242 469 252 464 260 456" fill="none" stroke="#fe3a6f" stroke-width="3" stroke-linecap="round"/>
  <path d="M242.5 457.5 L260 456 L250 476" fill="none" stroke="#fe3a6f" stroke-width="3" stroke-linecap="round" stroke-linejoin="round"/>
</svg>
<div class="abs" style="left:1625px;top:531px;width:40px;height:40px;background:#409eff;border-radius:6px 0 0 6px">
  <svg class="abs" style="left:11px;top:8px" width="20" height="20" viewBox="0 0 20 20">
    <path d="M8.6 2 H11.4 L11.9 4.4 L13.7 5.4 L16 4.6 L17.4 7 L15.6 8.6 V10.6 L17.4 12.2 L16 14.6 L13.7 13.8 L11.9 14.8 L11.4 17.2 H8.6 L8.1 14.8 L6.3 13.8 L4 14.6 L2.6 12.2 L4.4 10.6 V8.6 L2.6 7 L4 4.6 L6.3 5.4 L8.1 4.4 Z" fill="none" stroke="#fff" stroke-width="1.3" stroke-linejoin="round"/>
    <circle cx="10" cy="9.6" r="2.6" fill="none" stroke="#fff" stroke-width="1.3"/>
  </svg>
</div>

</body></html>
